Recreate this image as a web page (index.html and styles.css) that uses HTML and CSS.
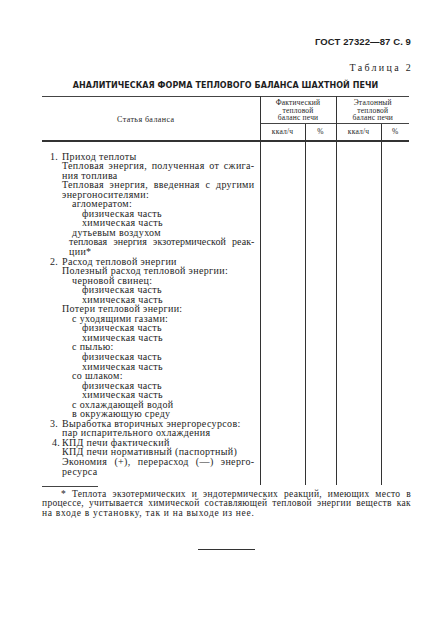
FILE: index.html
```html
<!DOCTYPE html>
<html lang="ru">
<head>
<meta charset="utf-8">
<title>ГОСТ 27322—87 С. 9</title>
<link rel="stylesheet" href="styles.css">
</head>
<body>
<div class="page">
  <div class="runhead">ГОСТ 27322—87 С. 9</div>
  <div class="tabno">Таблица 2</div>
  <div class="title">АНАЛИТИЧЕСКАЯ ФОРМА ТЕПЛОВОГО БАЛАНСА ШАХТНОЙ ПЕЧИ</div>
  <table class="bal">
    <colgroup>
      <col class="c1"><col class="c2"><col class="c3"><col class="c4"><col class="c5">
    </colgroup>
    <thead>
      <tr class="h1">
        <th rowspan="2" class="art">Статья баланса</th>
        <th colspan="2" class="grp">Фактический<br>тепловой<br>баланс печи</th>
        <th colspan="2" class="grp">Эталонный<br>тепловой<br>баланс печи</th>
      </tr>
      <tr class="h2">
        <th class="unit">ккал/ч</th><th class="unit">%</th><th class="unit">ккал/ч</th><th class="unit">%</th>
      </tr>
    </thead>
    <tbody>
      <tr>
        <td class="items">
          <div class="ln n"><span class="no">1.</span>Приход теплоты</div>
          <div class="ln l1 j">Тепловая энергия, полученная от сжига-</div>
          <div class="ln l1">ния топлива</div>
          <div class="ln l1 j">Тепловая энергия, введенная с другими</div>
          <div class="ln l1">энергоносителями:</div>
          <div class="ln l2">агломератом:</div>
          <div class="ln l3">физическая часть</div>
          <div class="ln l3">химическая часть</div>
          <div class="ln l2">дутьевым воздухом</div>
          <div class="ln l2b j tight">тепловая энергия экзотермической реак-</div>
          <div class="ln l2b">ции*</div>
          <div class="ln n"><span class="no">2.</span>Расход тепловой энергии</div>
          <div class="ln l1">Полезный расход тепловой энергии:</div>
          <div class="ln l2">черновой свинец:</div>
          <div class="ln l3">физическая часть</div>
          <div class="ln l3">химическая часть</div>
          <div class="ln l1">Потери тепловой энергии:</div>
          <div class="ln l2">с уходящими газами:</div>
          <div class="ln l3">физическая часть</div>
          <div class="ln l3">химическая часть</div>
          <div class="ln l2">с пылью:</div>
          <div class="ln l3">физическая часть</div>
          <div class="ln l3">химическая часть</div>
          <div class="ln l2">со шлаком:</div>
          <div class="ln l3">физическая часть</div>
          <div class="ln l3">химическая часть</div>
          <div class="ln l2">с охлаждающей водой</div>
          <div class="ln l2">в окружающую среду</div>
          <div class="ln n"><span class="no">3.</span>Выработка вторичных энергоресурсов:</div>
          <div class="ln l1">пар испарительного охлаждения</div>
          <div class="ln n n4"><span class="no">4.</span>КПД печи фактический</div>
          <div class="ln l1">КПД печи нормативный (паспортный)</div>
          <div class="ln l1 j">Экономия (+), перерасход (—) энерго-</div>
          <div class="ln l1">ресурса</div>
        </td>
        <td></td><td></td><td></td><td></td>
      </tr>
    </tbody>
  </table>
  <div class="fnrule"></div>
  <div class="footnote">
    <div class="fl first j">* Теплота экзотермических и эндотермических реакций, имеющих место в</div>
    <div class="fl j">процессе, учитывается химической составляющей тепловой энергии веществ как</div>
    <div class="fl last">на входе в установку, так и на выходе из нее.</div>
  </div>
  <div class="endrule"></div>
</div>
</body>
</html>
```

FILE: styles.css
```css
html, body {
  margin: 0;
  padding: 0;
  background: #ffffff;
}

.page {
  width: 435px;
  height: 619px;
  box-sizing: border-box;
  padding: 36px 24px 0 42px;
  color: #1e1e1e;
  font-family: "Liberation Serif", "DejaVu Serif", serif;
}

.runhead {
  text-align: right;
  font-family: "Liberation Sans", "DejaVu Sans", sans-serif;
  font-weight: bold;
  font-size: 9.5px;
  line-height: 12px;
  letter-spacing: 0.1px;
}

.tabno {
  margin-top: 14px;
  text-align: right;
  font-size: 10px;
  line-height: 12px;
  letter-spacing: 2.3px;
  margin-right: -2px;
}

.title {
  margin-top: 7px;
  width: 367px;
  text-align: center;
  font-family: "DejaVu Sans", "Liberation Sans", sans-serif;
  font-weight: bold;
  font-size: 8px;
  line-height: 10px;
  letter-spacing: 0.05px;
  white-space: nowrap;
}

.bal {
  margin-top: 5px;
  width: 367px;
  border-collapse: collapse;
  table-layout: fixed;
  border-top: 1.5px solid #444;
}

.c1 { width: 218px; }
.c2 { width: 45px; }
.c3 { width: 31px; }
.c4 { width: 45px; }
.c5 { width: 28px; }

.bal th {
  font-weight: normal;
  padding: 0;
  font-size: 7.5px;
  line-height: 7.6px;
  text-align: center;
  vertical-align: middle;
  letter-spacing: 0.2px;
}

.bal thead {
  border-bottom: 2px solid #333;
}

.h1 { height: 27px; }
.h2 { height: 17px; }

.bal th.art {
  font-size: 8px;
  letter-spacing: 0.4px;
  padding: 4px 10px 0 0;
}

.bal th.grp {
  border-left: 1px solid #333;
  padding-top: 1px;
}

.bal th.unit {
  border-left: 1px solid #333;
  border-top: 1px solid #444;
  padding-top: 1px;
}

.bal tr.h2 th:first-child {
  border-left: 1px solid #333;
}

.bal td {
  padding: 0;
  border-left: 1px solid #333;
  vertical-align: top;
}

.bal td.items {
  border-left: none;
  padding: 10px 5px 8px 0;
  font-size: 10px;
  line-height: 9.55px;
  letter-spacing: 0.35px;
  height: 344px;
  box-sizing: border-box;
}

.ln {
  white-space: nowrap;
}

.j {
  text-align: justify;
  text-align-last: justify;
}

.ln.tight {
  letter-spacing: 0.05px;
}

.n { padding-left: 8px; }
.n4 { padding-left: 10px; }
.no {
  display: inline-block;
  width: 12px;
}
.n4 .no { width: 10px; }
.l1 { padding-left: 20px; }
.l2 { padding-left: 30px; }
.l2b { padding-left: 27px; }
.l3 { padding-left: 40px; }

.fnrule {
  width: 56px;
  border-top: 1px solid #444;
  margin-top: 1px;
}

.footnote {
  margin: 3px 0 0 0;
  width: 369px;
  font-size: 9.5px;
  line-height: 9.7px;
}

.fl {
  white-space: nowrap;
  letter-spacing: 0.3px;
}

.fl.first {
  padding-left: 19px;
}

.fl.last {
  letter-spacing: 0.7px;
}

.endrule {
  width: 57px;
  margin: 30px 0 0 156px;
  border-top: 1px solid #333;
}
```
